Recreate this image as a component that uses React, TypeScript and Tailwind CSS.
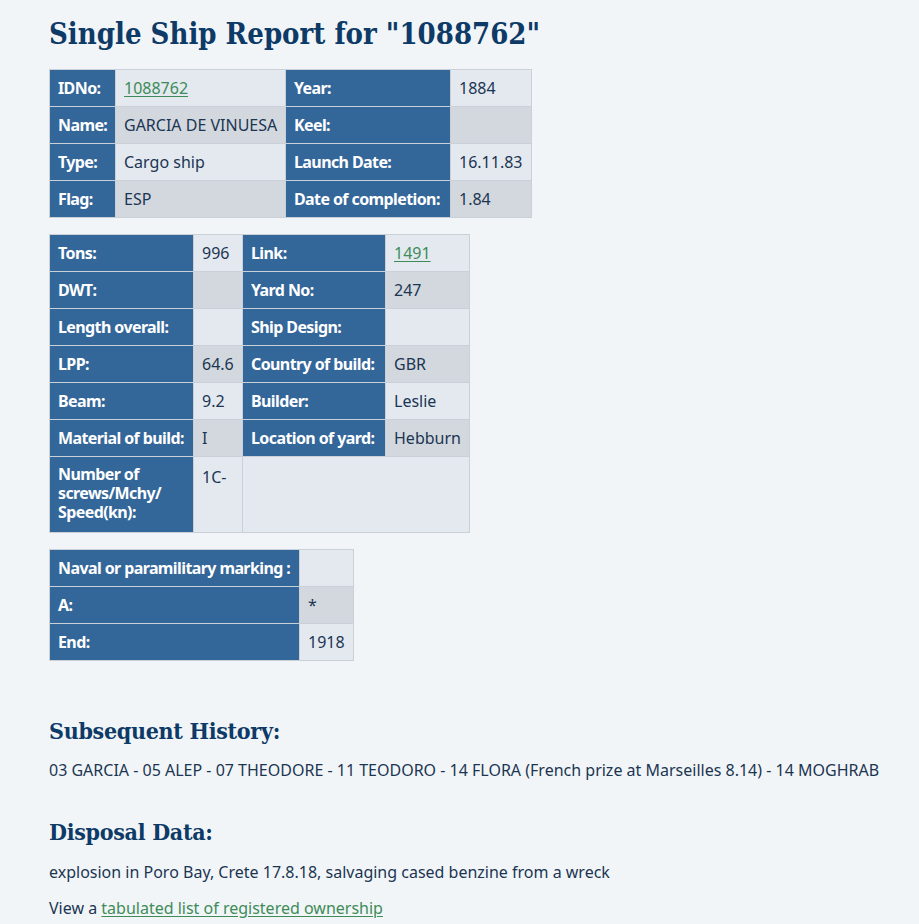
const label = 'bg-[#336699] text-white font-bold tracking-[-0.6px] px-2 border border-[#c9d0d8] text-left align-middle'
const light = 'bg-[#e4e9f0] px-2 border border-[#c9d0d8] align-middle'
const dark = 'bg-[#d3d8de] px-2 border border-[#c9d0d8] align-middle'
const link = 'text-[#3d8c57] underline underline-offset-2'
const serif = "font-['DejaVu_Serif_Condensed','DejaVu_Serif',serif] font-stretch-condensed font-bold text-[#0d3a66]"

function Main() {
  return (
    <table className="border-collapse text-[16px] text-[#1b3552] table-fixed w-[482px]">
      <colgroup>
        <col className="w-[66px]" />
        <col className="w-[170px]" />
        <col className="w-[165px]" />
        <col className="w-[81px]" />
      </colgroup>
      <tbody>
        <tr className="h-[37px]">
          <th className={label}>IDNo:</th>
          <td className={light}><a className={link} href="#">1088762</a></td>
          <th className={label}>Year:</th>
          <td className={light}>1884</td>
        </tr>
        <tr className="h-[37px]">
          <th className={label}>Name:</th>
          <td className={dark + ' whitespace-nowrap'}>GARCIA DE VINUESA</td>
          <th className={label}>Keel:</th>
          <td className={dark}></td>
        </tr>
        <tr className="h-[37px]">
          <th className={label}>Type:</th>
          <td className={light}>Cargo ship</td>
          <th className={label}>Launch Date:</th>
          <td className={light}>16.11.83</td>
        </tr>
        <tr className="h-[37px]">
          <th className={label}>Flag:</th>
          <td className={dark}>ESP</td>
          <th className={label + ' whitespace-nowrap'}>Date of completion:</th>
          <td className={dark}>1.84</td>
        </tr>
      </tbody>
    </table>
  )
}

function Dimensions() {
  const rows: [string, string, string, string | JSX.Element][] = [
    ['Tons:', '996', 'Link:', <a className={link} href="#">1491</a>],
    ['DWT:', '', 'Yard No:', '247'],
    ['Length overall:', '', 'Ship Design:', ''],
    ['LPP:', '64.6', 'Country of build:', 'GBR'],
    ['Beam:', '9.2', 'Builder:', 'Leslie'],
    ['Material of build:', 'I', 'Location of yard:', 'Hebburn'],
  ]
  return (
    <table className="border-collapse text-[16px] text-[#1b3552] table-fixed w-[420px]">
      <colgroup>
        <col className="w-[144px]" />
        <col className="w-[49px]" />
        <col className="w-[143px]" />
        <col className="w-[84px]" />
      </colgroup>
      <tbody>
        {rows.map((r, i) => {
          const v = i % 2 === 0 ? light : dark
          return (
            <tr key={i} className="h-[37px]">
              <th className={label + ' whitespace-nowrap'}>{r[0]}</th>
              <td className={v + ' whitespace-nowrap'}>{r[1]}</td>
              <th className={label + ' whitespace-nowrap'}>{r[2]}</th>
              <td className={v}>{r[3]}</td>
            </tr>
          )
        })}
        <tr className="h-[76px]">
          <th className={label + ' leading-[19px] align-top pt-[8px] pb-[6px]'}>Number of screws/Mchy/ Speed(kn):</th>
          <td className={light + ' align-top pt-[8px]'}>1C-</td>
          <td className={light} colSpan={2}></td>
        </tr>
      </tbody>
    </table>
  )
}

function Marking() {
  return (
    <table className="border-collapse text-[16px] text-[#1b3552] table-fixed w-[304px]">
      <colgroup>
        <col className="w-[250px]" />
        <col className="w-[54px]" />
      </colgroup>
      <tbody>
        <tr className="h-[37px]">
          <th className={label + ' whitespace-nowrap'}>Naval or paramilitary marking :</th>
          <td className={light}></td>
        </tr>
        <tr className="h-[37px]">
          <th className={label}>A:</th>
          <td className={dark}>*</td>
        </tr>
        <tr className="h-[37px]">
          <th className={label}>End:</th>
          <td className={light}>1918</td>
        </tr>
      </tbody>
    </table>
  )
}

export default function App() {
  return (
    <div className="min-h-screen bg-[#f2f5f8] pl-[49px] pr-[20px] pt-[12px] pb-4 font-['Noto_Sans','Open_Sans',sans-serif] text-[#1b3552]">
      <h1 className={serif + ' text-[29px] leading-[44px]'}>
        Single Ship Report for "1088762"
      </h1>
      <div className="mt-[13px] flex flex-col items-start gap-[16px]">
        <Main />
        <Dimensions />
        <Marking />
      </div>
      <h2 className={serif + ' mt-[53px] text-[23px] leading-[34px] tracking-[-0.3px]'}>
        Subsequent History:
      </h2>
      <p className="mt-[10px] text-[16px] leading-[24px] whitespace-nowrap">
        03 GARCIA - 05 ALEP - 07 THEODORE - 11 TEODORO - 14 FLORA (French prize at Marseilles 8.14) - 14 MOGHRAB
      </p>
      <h2 className={serif + ' mt-[33px] text-[23px] leading-[34px] tracking-[-0.3px]'}>
        Disposal Data:
      </h2>
      <p className="mt-[11px] text-[16px] leading-[24px]">
        explosion in Poro Bay, Crete 17.8.18, salvaging cased benzine from a wreck
      </p>
      <p className="mt-[12px] text-[16px] leading-[24px]">
        View a <a className={link} href="#">tabulated list of registered ownership</a>
      </p>
    </div>
  )
}
